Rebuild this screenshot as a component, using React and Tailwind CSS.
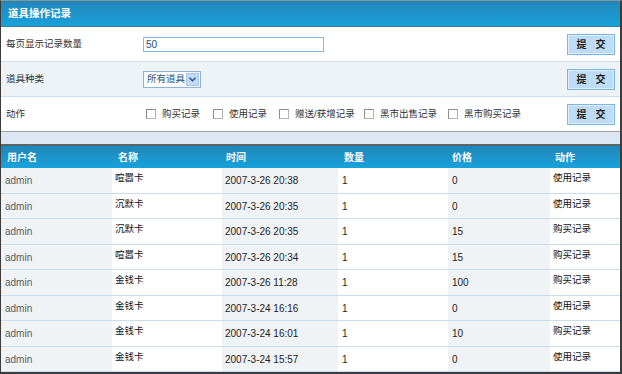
import React from "react";

const FONT = { fontFamily: '"Liberation Sans", "Noto Sans CJK SC", sans-serif' };

const rows = [
  ["admin", "喧嚣卡", "2007-3-26 20:38", "1", "0", "使用记录"],
  ["admin", "沉默卡", "2007-3-26 20:35", "1", "0", "使用记录"],
  ["admin", "沉默卡", "2007-3-26 20:35", "1", "15", "购买记录"],
  ["admin", "喧嚣卡", "2007-3-26 20:34", "1", "15", "购买记录"],
  ["admin", "金钱卡", "2007-3-26 11:28", "1", "100", "购买记录"],
  ["admin", "金钱卡", "2007-3-24 16:16", "1", "0", "使用记录"],
  ["admin", "金钱卡", "2007-3-24 16:01", "1", "10", "购买记录"],
  ["admin", "金钱卡", "2007-3-24 15:57", "1", "0", "使用记录"],
];

function Btn() {
  return (
    <button className="w-[48px] h-[21px] border border-[#7db6e0] bg-[#bedcf6] shadow-[inset_0_0_0_1px_#dcedfb] text-[10px] font-bold text-[#1c1c1c] tracking-[3px] pl-[3px] flex items-center justify-center">
      提 交
    </button>
  );
}

function Check({ label }) {
  return (
    <div className="flex items-center">
      <span className="w-[10px] h-[10px] border border-[#b4b4b4] border-t-[#8c8c8c] border-l-[#8c8c8c] bg-white" />
      <span className="ml-[6px] text-[9.5px] text-[#333]">{label}</span>
    </div>
  );
}

const cols = "grid grid-cols-[111px_110px_116px_110px_102px_70px]";
const cellBg = ["bg-[#eff3f6]", "bg-white", "bg-[#eff3f6]", "bg-white", "bg-[#eff3f6]", "bg-white"];

export default function App() {
  return (
    <div style={FONT} className="w-[622px] h-[374px] bg-white border-l border-l-[#3c3c3c] border-t border-t-[#8a9494] border-r-2 border-r-[#3c3c3c] border-b-2 border-b-[#3c3c3c] flex flex-col overflow-hidden">
      <div className="h-[25px] bg-gradient-to-b from-[#2186b8] to-[#17a2db] flex items-center pl-[7px] text-white text-[10.5px] font-bold shrink-0">
        道具操作记录
      </div>
      <div className="h-px bg-[#3d7d9c] shrink-0" />

      <div className="h-[35px] border-b border-[#c9e0f2] flex items-center pl-[5px] pr-[5px] shrink-0">
        <div className="w-[137px] text-[9.5px] text-[#333]">每页显示记录数量</div>
        <div className="w-[181px] h-[15px] border border-[#86b9e0] bg-white flex items-center pl-[2px] text-[10px] text-[#1f4f7a]">50</div>
        <div className="flex-1" />
        <Btn />
      </div>

      <div className="h-[35px] border-b border-[#c9e0f2] bg-[#eef3f7] flex items-center pl-[5px] pr-[5px] shrink-0">
        <div className="w-[137px] text-[9.5px] text-[#333]">道具种类</div>
        <div className="w-[58px] h-[17px] border border-[#8fb4d8] bg-white flex items-center">
          <span className="flex-1 pl-[3px] text-[9.5px] text-[#1f5680]">所有道具</span>
          <span className="w-[13px] h-[13px] mr-px bg-[#c4d9f2] border border-[#a9c4e6] flex items-center justify-center">
            <svg width="7" height="5" viewBox="0 0 7 5"><path d="M0.5 0.8 L3.5 3.8 L6.5 0.8" fill="none" stroke="#2b4f8c" strokeWidth="1.4" /></svg>
          </span>
        </div>
        <div className="flex-1" />
        <Btn />
      </div>

      <div className="h-[34px] flex items-center pl-[5px] pr-[5px] shrink-0">
        <div className="w-[140px] text-[9.5px] text-[#333]">动作</div>
        <div className="flex items-center">
          <div className="w-[67px]"><Check label="购买记录" /></div>
          <div className="w-[66px]"><Check label="使用记录" /></div>
          <div className="w-[85px]"><Check label="赠送/获增记录" /></div>
          <div className="w-[84px]"><Check label="黑市出售记录" /></div>
          <div><Check label="黑市购买记录" /></div>
        </div>
        <div className="flex-1" />
        <Btn />
      </div>

      <div className="h-px bg-[#9aa3a3] shrink-0" />
      <div className="h-[12px] bg-[#dce7f3] shrink-0" />
      <div className="h-[2px] bg-[#56686a] shrink-0" />

      <div className={`${cols} h-[22px] bg-gradient-to-b from-[#2186b8] to-[#17a2db] text-white text-[10px] font-bold shrink-0`}>
        <div className="pl-[6px] flex items-center">用户名</div>
        <div className="pl-[6px] flex items-center">名称</div>
        <div className="pl-[4px] flex items-center">时间</div>
        <div className="pl-[6px] flex items-center">数量</div>
        <div className="pl-[4px] flex items-center">价格</div>
        <div className="pl-[5px] flex items-center">动作</div>
      </div>

      {rows.map((r, i) => (
        <div key={i} className={`${cols} ${i % 2 === 0 ? "h-[26px]" : "h-[25px]"} border-b border-[#c8def0] shrink-0`}>
          {r.map((c, j) => (
            <div
              key={j}
              className={`${cellBg[j]} flex items-center ${j === 0 ? "pl-[4px] text-[10px] text-[#5a5a5a]" : "pl-[3px]"} ${j === 2 ? "text-[10px] text-[#222]" : ""} ${j === 1 || j === 5 ? "text-[9.5px] text-[#111] pb-[4px]" : ""} ${j === 3 || j === 4 ? "text-[10px] text-[#222] pl-[4px]" : ""}`}
            >
              {c}
            </div>
          ))}
        </div>
      ))}
    </div>
  );
}
